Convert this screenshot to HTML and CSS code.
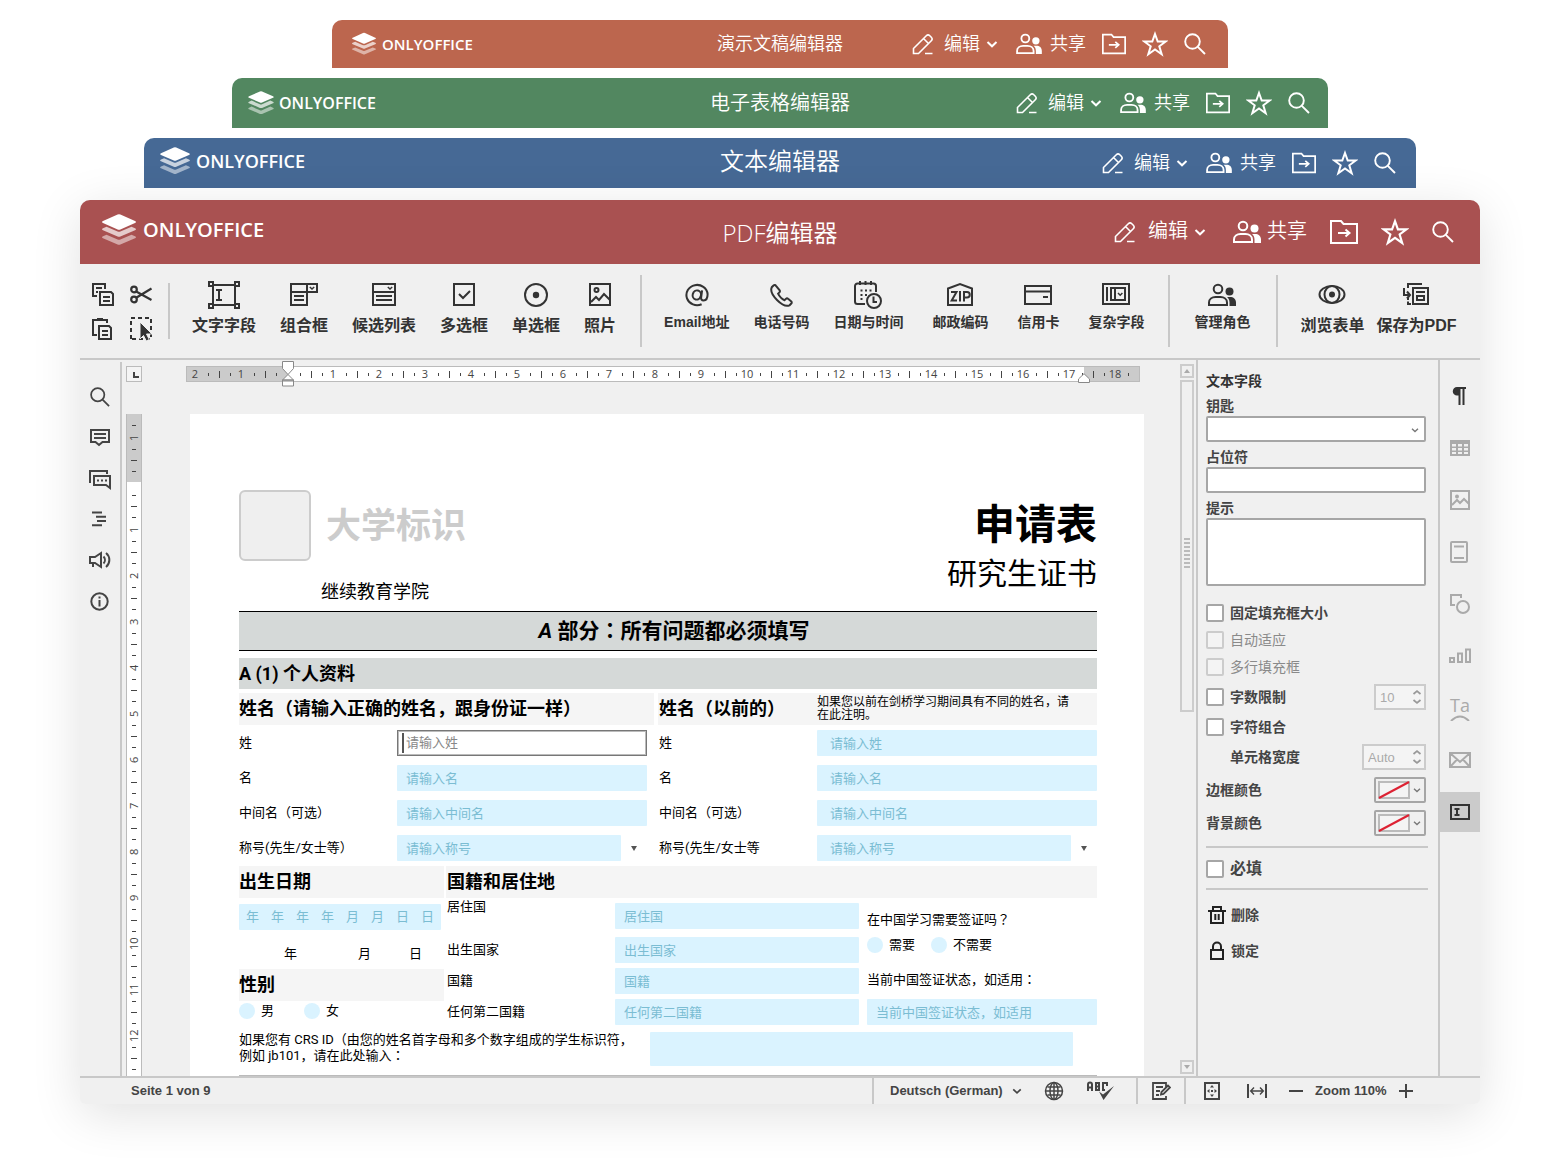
FILE: index.html
```html
<!DOCTYPE html>
<html lang="zh-CN">
<head>
<meta charset="utf-8">
<meta name="viewport" content="width=device-width, initial-scale=1">
<title>ONLYOFFICE</title>
<link rel="stylesheet" href="styles.css">
</head>
<body>
<svg class="sprite" aria-hidden="true">
  <symbol id="logo" viewBox="0 0 34 32"><path d="M15.6.5a4 4 0 0 1 2.8 0L33 7q2 1 0 2L18.4 15.400a4 4 0 0 1-2.800 0L1 9q-2-1 0-2z"/><path opacity=".7" d="M4.500 12.800 1 14.300q-2 1 0 2l14.600 6.200a4 4 0 0 0 2.800 0L33 16.300q2-1 0-2l-3.500-1.500-11.100 4.800a4 4 0 0 1-2.800 0z"/><path opacity=".5" d="M4.500 20.800 1 22.300q-2 1 0 2l14.600 6.200a4 4 0 0 0 2.800 0L33 24.300q2-1 0-2l-3.500-1.500-11.100 4.800a4 4 0 0 1-2.800 0z"/></symbol>
  <symbol id="pencil" viewBox="0 0 22 22"><g fill="none" stroke="currentColor" stroke-width="1.600"><path d="M1.500 20.500v-5L14.300 2.700a2.500 2.500 0 0 1 3.500 0l1.500 1.500a2.500 2.500 0 0 1 0 3.500L6.500 20.500zM11.500 5.500l5 5M13 20.500h7.500"/></g></symbol>
  <symbol id="chev" viewBox="0 0 12 12"><path d="M1.500 4 6 8.300 10.500 4" fill="none" stroke="currentColor" stroke-width="2"/></symbol>
  <symbol id="users" viewBox="0 0 28 24"><g fill="none" stroke="currentColor" stroke-width="2"><circle cx="10" cy="6" r="4.300"/><path d="M1 22v-2.500c0-3.500 3-5.500 6.500-5.500h5c3.500 0 6.500 2 6.500 5.500V22z"/></g><circle cx="21.500" cy="8.500" r="4"/><path d="M19 14h3c3.500 0 6 2 6 5.500V23h-6.500v-3.500c0-2.500-1-4.200-2.500-5.500z"/></symbol>
  <symbol id="folder" viewBox="0 0 28 24"><g fill="none" stroke="currentColor" stroke-width="2"><path d="M1 23V1h10l2.500 3H27v19zM8 13h11"/><path d="m15.500 9.500 4 3.500-4 3.500"/></g></symbol>
  <symbol id="star" viewBox="1 1 26 26"><path d="m14 4 2.700 7.500h8l-6.400 4.800 2.400 7.900-6.700-4.700-6.700 4.700 2.400-7.900-6.400-4.800h8z" fill="none" stroke="currentColor" stroke-width="2"/></symbol>
  <symbol id="search" viewBox="0 0 22 22"><g fill="none" stroke="currentColor" stroke-width="1.900"><circle cx="8.500" cy="8.500" r="7.300"/><path d="m13.800 13.800 7.200 7.200"/></g></symbol>

  <symbol id="copy" viewBox="0 0 22 24"><g fill="none" stroke="currentColor" stroke-width="2"><path d="M5 13H1V1h12v5M4 5h6M4 9h2M8 22V9h11l2 2v11z"/><path d="M11 14h7M11 18h7"/></g></symbol>
  <symbol id="cut" viewBox="0 0 22 24"><g fill="none" stroke="currentColor" stroke-width="2.200"><circle cx="4" cy="6.500" r="2.800"/><circle cx="4" cy="16.500" r="2.800"/><path d="M6.200 8.500 21.500 17M6.200 14.800 21.500 5.500"/></g></symbol>
  <symbol id="paste" viewBox="0 0 22 24"><g fill="none" stroke="currentColor" stroke-width="2"><path d="M5 18H1V3h14v3M7 22V9h10l2 2v11zM10 14h6M10 18h6"/></g><path d="M5 1h6v3H5z"/></symbol>
  <symbol id="select" viewBox="0 0 22 24"><path d="M1 22V1h20v21z" fill="none" stroke="currentColor" stroke-width="2" stroke-dasharray="4 3"/><path d="M10 5v17l3.500-3.500 2.800 5.500 3-1.500-2.800-5.500H22z" stroke="#f0f0f0"/></symbol>
  <symbol id="textfield" viewBox="0 0 32 28"><g fill="none" stroke="currentColor" stroke-width="2"><path d="M5 4h22M5 24h22M5 4v20M27 4v20M8 9h6M8 19h6M11 9v10"/><path fill="#f0f0f0" d="M1 1h4v4H1zM27 1h4v4h-4zM1 23h4v4H1zM27 23h4v4h-4z"/></g></symbol>
  <symbol id="combo" viewBox="0 0 28 28"><g fill="none" stroke="currentColor" stroke-width="2"><path d="M1 3h26v8H1zM1 11v13h16V3M4 15h10M4 19h10"/><path stroke-width="1.500" d="m19.800 6 2.200 2 2.200-2"/></g></symbol>
  <symbol id="list" viewBox="0 0 24 28"><g fill="none" stroke="currentColor" stroke-width="2"><path d="M1 3h22v21H1zM1 11h22M4 15h16M4 19h16"/><path stroke-width="1.500" d="m15.800 6 2.200 2 2.200-2"/></g></symbol>
  <symbol id="check" viewBox="0 0 24 28"><path d="M2 3h20v21H2zM7 13l4 4 7-7" fill="none" stroke="currentColor" stroke-width="2"/></symbol>
  <symbol id="radio" viewBox="0 0 24 28"><circle cx="12" cy="14" r="11" fill="none" stroke="currentColor" stroke-width="2"/><circle cx="12" cy="14" r="3.200"/></symbol>
  <symbol id="photo" viewBox="0 0 24 28"><g fill="none" stroke="currentColor" stroke-width="2"><path d="M2 3h20v21H2zM3 21l5-5 3 3 5-6 6 6"/><circle cx="8.500" cy="9" r="2"/></g></symbol>
  <symbol id="at" viewBox="0 0 26 28"><g fill="none" stroke="currentColor" stroke-width="2.200"><path d="M18 24a11.500 11 0 1 1 6.500-11c0 4-1.500 7-4.300 7-2.200 0-3-1.500-2.700-3.500L18.500 9"/><ellipse cx="12.800" cy="14" rx="4.500" ry="5" transform="rotate(15 12.800 14)"/></g></symbol>
  <symbol id="phone" viewBox="0 0 24 28"><path d="M4.500 4.500 2.800 6.200C1 10 4 15 8 19s9 7 12.500 5.300l1.800-1.800c.6-.6.600-1.500 0-2.100l-3.200-2.600a1.600 1.600 0 0 0-2.200.1l-1.300 1.300c-2.600-1-5.200-3.700-6.500-6.500l1.300-1.300c.6-.6.600-1.500.1-2.200L7 4.800a1.700 1.700 0 0 0-2.500-.3z" fill="none" stroke="currentColor" stroke-width="2"/></symbol>
  <symbol id="date" viewBox="0 0 28 28"><g fill="none" stroke="currentColor" stroke-width="2"><path d="M11 23H3.500A2.500 2.500 0 0 1 1 20.500V5a2.500 2.500 0 0 1 2.500-2.500h16A2.500 2.500 0 0 1 22 5v6M6 0v4M11.500 0v4M17 0v4"/><circle cx="20" cy="20" r="7"/><path d="M19.500 15.500V21H23"/><path stroke-dasharray="2 2.500" d="M6.500 9.500h11M6.500 14h7M6.500 18h3"/></g></symbol>
  <symbol id="zip" viewBox="0 0 28 28"><g fill="none" stroke="currentColor" stroke-width="2"><path d="M2 24V7.500L14 3l12 4.500V24z"/><path d="M5 11h5.500L5.700 19.500H11M14 10v10.500M18 20.500V11h3a2.500 2.500 0 0 1 0 5.500h-3"/></g></symbol>
  <symbol id="card" viewBox="0 0 28 28"><path d="M1 5h26v18H1zM1 10.500h26M19 16h5" fill="none" stroke="currentColor" stroke-width="2"/></symbol>
  <symbol id="complex" viewBox="0 0 28 28"><g fill="none" stroke="currentColor" stroke-width="2"><path d="M1 3h26v20H1zM5 6v14M9 7h14v12H9zM13 7v12"/><path stroke-width="1.500" d="m16 12 2.200 2.200 2.200-2.200"/></g></symbol>
  <symbol id="eye" viewBox="0 0 28 28"><g fill="none" stroke="currentColor" stroke-width="2"><ellipse cx="14" cy="13.500" rx="12.500" ry="8.500"/><ellipse cx="14" cy="13.500" rx="7.500" ry="8.500"/></g><circle cx="14" cy="13.500" r="3"/></symbol>
  <symbol id="savepdf" viewBox="0 0 28 28"><g fill="none" stroke="currentColor" stroke-width="2"><path d="M20 3H6v4M2 7v7h6M11 7h15v16H11zM14 11h9M15 15h7v4h-7zM6 17v2M6 20.500V23h3"/><path d="m5 10.500 3 3.500-3 3.500"/></g></symbol>

  <symbol id="comment" viewBox="0 0 22 22"><path d="M2 3h18v12h-6.500L10 18l-3.500-3H2zM5 7h12M5 11h12" fill="none" stroke="currentColor" stroke-width="2"/></symbol>
  <symbol id="chat" viewBox="0 0 24 22"><g fill="none" stroke="currentColor" stroke-width="2"><path d="M2 15V3h17v3M6 8h16v12l-4-3H6z"/><path stroke-dasharray="2 2" d="M9 12.500h10"/></g></symbol>
  <symbol id="heads" viewBox="0 0 22 22"><path d="M3 3.500h10M7 7.700h10M8 12h9M3 16.300h10" fill="none" stroke="currentColor" stroke-width="2"/></symbol>
  <symbol id="speaker" viewBox="0 0 24 22"><path d="M2 7v6h5l6 4v-14L7 7zM5 13v4M15.500 6.500a5 5 0 0 1 0 7M18 3a9 9 0 0 1 0 14" fill="none" stroke="currentColor" stroke-width="2"/></symbol>
  <symbol id="info" viewBox="0 0 22 22"><circle cx="10.500" cy="10.500" r="8.200" fill="none" stroke="currentColor" stroke-width="2"/><path d="M9.500 9h2v6.500h-2zM9.500 5.500h2v2h-2z"/></symbol>

  <symbol id="para" viewBox="0 0 22 22"><path d="M17 2v2h-1.500v16h-2V4h-2v16h-2v-9.500H8A4.200 4.200 0 0 1 8 2z"/></symbol>
  <symbol id="table" viewBox="0 0 22 22"><path d="M1 3h20v16H1zm2 4v2.500h4V7zm6 0v2.500h4V7zm6 0v2.500h4V7zM3 11v2.500h4V11zm6 0v2.500h4V11zm6 0v2.500h4V11zM3 15v2h4v-2zm6 0v2h4v-2zm6 0v2h4v-2z" fill-rule="evenodd"/></symbol>
  <symbol id="image" viewBox="0 0 22 22"><path d="M2 2h18v18H2zM3 16l5-5 3 3 4-4 5 5" fill="none" stroke="currentColor" stroke-width="2"/><circle cx="8" cy="7.500" r="2"/></symbol>
  <symbol id="headfoot" viewBox="0 0 22 22"><path d="M3 1h14q1 0 1 1v18q0 1-1 1H3q-1 0-1-1V2q0-1 1-1zM5 5.500h10M5 17h10" fill="none" stroke="currentColor" stroke-width="2"/></symbol>
  <symbol id="shape" viewBox="0 0 22 22"><path d="M6 12H2V2h10v3" fill="none" stroke="currentColor" stroke-width="2"/><circle cx="14" cy="14" r="6" fill="none" stroke="currentColor" stroke-width="2"/></symbol>
  <symbol id="chart" viewBox="0 0 24 22"><path d="M2 13h4v4H2zM10 8.500h4V17h-4zM18 4.500h4V17h-4z" fill="none" stroke="currentColor" stroke-width="2"/></symbol>
  <symbol id="mail" viewBox="0 0 24 22"><path d="M2 4h20v14H2zM2 4l10 9L22 4M2 18l7-7.500M22 18l-7-7.500" fill="none" stroke="currentColor" stroke-width="2"/></symbol>
  <symbol id="field" viewBox="0 0 22 22"><path d="M2 4h18v14H2zM5.500 8h5M5.500 14h5M8 8v6" fill="none" stroke="currentColor" stroke-width="2"/></symbol>
  <symbol id="spin" viewBox="0 0 10 16"><path d="m1.500 5 3.500-3 3.500 3M1.500 11l3.500 3 3.500-3" fill="none" stroke="currentColor" stroke-width="1.700"/></symbol>
  <symbol id="trash" viewBox="0 0 18 20"><path d="M0 6h18M5 6V2h8v4M3 6v12h12V6M7.300 9v6M10.700 9v6" fill="none" stroke="currentColor" stroke-width="2"/></symbol>
  <symbol id="lock" viewBox="0 0 18 20"><path d="M3 9h12v9H3zM5 9V5.500a4 4 0 0 1 8 0V9" fill="none" stroke="currentColor" stroke-width="2"/></symbol>

  <symbol id="globe" viewBox="0 0 20 20"><g fill="none" stroke="currentColor" stroke-width="1.500"><circle cx="10" cy="10" r="8.500"/><ellipse cx="10" cy="10" rx="4" ry="8.500"/><path d="M10 2v16M2 10h16M3.500 6h13M3.500 14h13"/></g></symbol>
  <symbol id="spell" viewBox="0 0 28 20"><g fill="none" stroke="currentColor" stroke-width="2"><path d="M2 10V3.500a2 2 0 0 1 4 0V10M2 6.500h4M10 1v8M9 2h4v3l-1 .5 1 .5v3H9M21 5V2h-4v7h2"/></g><path d="m13 10.500 4 3L28 5 17.500 19z"/></symbol>
  <symbol id="review" viewBox="0 0 20 20"><path d="M15 6V2H2v16h13v-3M5 6h7M5 10h4M5 14h3M10 13.500l.5-2.500L17 4.500l2 2-6.500 6.500z" fill="none" stroke="currentColor" stroke-width="1.800"/></symbol>
  <symbol id="fitpage" viewBox="0 0 20 20"><path d="M3 2h14v16H3z" fill="none" stroke="currentColor" stroke-width="2"/><path d="m10 4 2 2.500H8zM10 16l2-2.500H8zM5 10l2.500-2v4zM15 10l-2.500-2v4zM9 9h2v2H9z"/></symbol>
  <symbol id="fitwidth" viewBox="0 0 22 20"><path d="M2 3v14M20 3v14" stroke="currentColor" stroke-width="2"/><path d="M5 10h12M8 6.500 4.700 10 8 13.500M14 6.500l3.300 3.500-3.300 3.500" fill="none" stroke="currentColor" stroke-width="1.400"/></symbol>
  <symbol id="minus" viewBox="0 0 16 16"><path d="M1 8h14" stroke="currentColor" stroke-width="2"/></symbol>
  <symbol id="plus" viewBox="0 0 16 16"><path d="M1 8h14M8 1v14" stroke="currentColor" stroke-width="2"/></symbol>
</svg>

<main class="stack">
  <header class="bar bar-slides">
    <div class="brand"><svg><use href="#logo"/></svg><span>ONLYOFFICE</span></div>
    <h2>演示文稿编辑器</h2>
    <div class="actions">
      <button class="edit"><svg class="i22"><use href="#pencil"/></svg><span>编辑</span><svg class="i12"><use href="#chev"/></svg></button>
      <button class="share"><svg class="iusers"><use href="#users"/></svg><span>共享</span></button>
      <button aria-label="打开文件位置"><svg class="ifolder"><use href="#folder"/></svg></button>
      <button aria-label="收藏"><svg class="istar"><use href="#star"/></svg></button>
      <button aria-label="搜索"><svg class="i22"><use href="#search"/></svg></button>
    </div>
  </header>
  <header class="bar bar-sheets">
    <div class="brand"><svg><use href="#logo"/></svg><span>ONLYOFFICE</span></div>
    <h2>电子表格编辑器</h2>
    <div class="actions">
      <button class="edit"><svg class="i22"><use href="#pencil"/></svg><span>编辑</span><svg class="i12"><use href="#chev"/></svg></button>
      <button class="share"><svg class="iusers"><use href="#users"/></svg><span>共享</span></button>
      <button aria-label="打开文件位置"><svg class="ifolder"><use href="#folder"/></svg></button>
      <button aria-label="收藏"><svg class="istar"><use href="#star"/></svg></button>
      <button aria-label="搜索"><svg class="i22"><use href="#search"/></svg></button>
    </div>
  </header>
  <header class="bar bar-docs">
    <div class="brand"><svg><use href="#logo"/></svg><span>ONLYOFFICE</span></div>
    <h2>文本编辑器</h2>
    <div class="actions">
      <button class="edit"><svg class="i22"><use href="#pencil"/></svg><span>编辑</span><svg class="i12"><use href="#chev"/></svg></button>
      <button class="share"><svg class="iusers"><use href="#users"/></svg><span>共享</span></button>
      <button aria-label="打开文件位置"><svg class="ifolder"><use href="#folder"/></svg></button>
      <button aria-label="收藏"><svg class="istar"><use href="#star"/></svg></button>
      <button aria-label="搜索"><svg class="i22"><use href="#search"/></svg></button>
    </div>
  </header>

  <section class="app">
    <header class="bar bar-pdf">
      <div class="brand"><svg><use href="#logo"/></svg><span>ONLYOFFICE</span></div>
      <h1>PDF编辑器</h1>
      <div class="actions">
        <button class="edit"><svg class="i22"><use href="#pencil"/></svg><span>编辑</span><svg class="i12"><use href="#chev"/></svg></button>
        <button class="share"><svg class="iusers"><use href="#users"/></svg><span>共享</span></button>
        <button aria-label="打开文件位置"><svg class="ifolder"><use href="#folder"/></svg></button>
        <button aria-label="收藏"><svg class="istar"><use href="#star"/></svg></button>
        <button aria-label="搜索"><svg class="i22"><use href="#search"/></svg></button>
      </div>
    </header>

    <nav class="toolbar">
      <div class="clip">
        <button aria-label="复制"><svg><use href="#copy"/></svg></button>
        <button aria-label="剪切"><svg><use href="#cut"/></svg></button>
        <button aria-label="粘贴"><svg><use href="#paste"/></svg></button>
        <button aria-label="选择"><svg><use href="#select"/></svg></button>
      </div>
      <div class="group">
        <button><svg class="w32"><use href="#textfield"/></svg>文字字段</button>
        <button><svg class="w28"><use href="#combo"/></svg>组合框</button>
        <button><svg class="w24"><use href="#list"/></svg>候选列表</button>
        <button><svg class="w24"><use href="#check"/></svg>多选框</button>
        <button><svg class="w24"><use href="#radio"/></svg>单选框</button>
        <button><svg class="w24"><use href="#photo"/></svg>照片</button>
      </div>
      <div class="group small">
        <button><svg class="w24"><use href="#at"/></svg>Email地址</button>
        <button><svg class="w24"><use href="#phone"/></svg>电话号码</button>
        <button><svg class="w28"><use href="#date"/></svg>日期与时间</button>
        <div class="wider">
          <button><svg class="w28"><use href="#zip"/></svg>邮政编码</button>
          <button><svg class="w28"><use href="#card"/></svg>信用卡</button>
          <button><svg class="w28"><use href="#complex"/></svg>复杂字段</button>
        </div>
      </div>
      <div class="group small roles">
        <button><svg class="w28 people"><use href="#users"/></svg>管理角色</button>
      </div>
      <div class="group last">
        <button><svg class="w28"><use href="#eye"/></svg>浏览表单</button>
        <button><svg class="w28"><use href="#savepdf"/></svg>保存为PDF</button>
      </div>
    </nav>

    <div class="workspace">
      <aside class="left">
        <button aria-label="查找"><svg class="i20"><use href="#search"/></svg></button>
        <button aria-label="批注"><svg class="i22"><use href="#comment"/></svg></button>
        <button aria-label="聊天"><svg class="w24"><use href="#chat"/></svg></button>
        <button aria-label="标题"><svg class="i22"><use href="#heads"/></svg></button>
        <button aria-label="反馈"><svg class="w24"><use href="#speaker"/></svg></button>
        <button aria-label="关于"><svg class="i22"><use href="#info"/></svg></button>
      </aside>

      <div class="canvas">
        <div class="ruler-row">
          <div class="corner"></div>
          <div class="hruler-wrap">
            <div class="hruler">
              <i>2</i><i>1</i><i></i><i>1</i><i>2</i><i>3</i><i>4</i><i>5</i><i>6</i><i>7</i><i>8</i><i>9</i><i>10</i><i>11</i><i>12</i><i>13</i><i>14</i><i>15</i><i>16</i><i>17</i><i>18</i>
            </div>
            <svg class="indent-left" viewBox="0 0 12 28"><g fill="#fff" stroke="#888"><path d="M.5.500h11v7L6 13.500.500 7.500zM6 13.500l5.500 5.500H.500zM.5 19h11v6H.500z"/><path d="M.5 20h11"/></g></svg>
            <svg class="indent-right" viewBox="0 0 12 10"><path d="M6 .7 11.500 6v3.500H.500V6z" fill="#fff" stroke="#888"/></svg>
          </div>
        </div>
        <div class="page-row">
          <div class="vruler">
            <i class="lead"></i><i><b>1</b></i><i></i><i><b>1</b></i><i><b>2</b></i><i><b>3</b></i><i><b>4</b></i><i><b>5</b></i><i><b>6</b></i><i><b>7</b></i><i><b>8</b></i><i><b>9</b></i><i><b>10</b></i><i><b>11</b></i><i><b>12</b></i>
          </div>
          <form class="page">
            <div class="doc-head">
              <div>
                <div class="uni"><span class="uni-box"></span><strong>大学标识</strong></div>
                <p class="college">继续教育学院</p>
              </div>
              <div class="doc-title">
                <h2>申请表</h2>
                <p>研究生证书</p>
              </div>
            </div>
            <h3 class="part"><em>A</em> 部分<span class="wide" lang="ja">：</span>所有问题都必须填写</h3>
            <h4 class="section">A (1) 个人资料</h4>

            <div class="names">
              <div class="name-col">
                <h5>姓名（请输入正确的姓名，跟身份证一样）</h5>
                <div class="rows">
                  <label for="n1">姓</label><span class="focus"><input id="n1" type="text" placeholder="请输入姓"></span>
                  <label for="n2">名</label><input id="n2" type="text" placeholder="请输入名">
                  <label for="n3">中间名（可选）</label><input id="n3" type="text" placeholder="请输入中间名">
                  <label for="n4">称号(先生/女士等）</label><span class="pick"><input id="n4" type="text" placeholder="请输入称号"><button type="button" aria-label="展开"></button></span>
                </div>
              </div>
              <div class="name-col former">
                <div class="head-note"><h5>姓名（以前的）</h5><p>如果您以前在剑桥学习期间具有不同的姓名，请在此注明。</p></div>
                <div class="rows">
                  <label for="f1">姓</label><input id="f1" type="text" placeholder="请输入姓">
                  <label for="f2">名</label><input id="f2" type="text" placeholder="请输入名">
                  <label for="f3">中间名（可选）</label><input id="f3" type="text" placeholder="请输入中间名">
                  <label for="f4">称号(先生/女士等</label><span class="pick"><input id="f4" type="text" placeholder="请输入称号"><button type="button" aria-label="展开"></button></span>
                </div>
              </div>
            </div>

            <div class="details">
              <div class="birth">
                <h5>出生日期</h5>
                <div class="comb">
                  <input aria-label="年 1" maxlength="1" placeholder="年"><input aria-label="年 2" maxlength="1" placeholder="年"><input aria-label="年 3" maxlength="1" placeholder="年"><input aria-label="年 4" maxlength="1" placeholder="年"><input aria-label="月 1" maxlength="1" placeholder="月"><input aria-label="月 2" maxlength="1" placeholder="月"><input aria-label="日 1" maxlength="1" placeholder="日"><input aria-label="日 2" maxlength="1" placeholder="日">
                </div>
                <div class="units"><span>年</span><span>月</span><span>日</span></div>
                <h5>性别</h5>
                <div class="radios sex">
                  <label><input type="radio" name="sex">男</label>
                  <label><input type="radio" name="sex">女</label>
                </div>
              </div>
              <div class="nation">
                <h5>国籍和居住地</h5>
                <div class="nation-grid">
                  <div class="places">
                    <div class="place first"><label for="p1">居住国</label><input id="p1" type="text" placeholder="居住国"></div>
                    <div class="place"><label for="p2">出生国家</label><input id="p2" type="text" placeholder="出生国家"></div>
                    <div class="place"><label for="p3">国籍</label><input id="p3" type="text" placeholder="国籍"></div>
                    <div class="place"><label for="p4">任何第二国籍</label><input id="p4" type="text" placeholder="任何第二国籍"></div>
                  </div>
                  <div class="visa">
                    <p>在中国学习需要签证吗<span class="wide" lang="ja">？</span></p>
                    <div class="radios">
                      <label><input type="radio" name="visa">需要</label>
                      <label><input type="radio" name="visa">不需要</label>
                    </div>
                    <label class="status" for="v1">当前中国签证状态，如适用<span class="wide" lang="ja">：</span></label>
                    <input id="v1" type="text" placeholder="当前中国签证状态，如适用">
                  </div>
                </div>
              </div>
            </div>

            <div class="crs">
              <label for="crs">如果您有 CRS ID（由您的姓名首字母和多个数字组成的学生标识符，<br>例如 jb101，请在此处输入<span class="wide" lang="ja">：</span></label>
              <input id="crs" type="text">
            </div>
          </form>
        </div>
      </div>

      <div class="scroll">
        <button class="arrow up" aria-label="向上滚动"></button>
        <div class="thumb"><span></span></div>
        <button class="arrow down" aria-label="向下滚动"></button>
      </div>

      <aside class="panel">
        <h3>文本字段</h3>
        <label for="key">钥匙</label>
        <div class="select"><select id="key"><option></option></select><svg><use href="#chev"/></svg></div>
        <label for="ph">占位符</label>
        <input class="box" id="ph" type="text">
        <label for="tip">提示</label>
        <textarea class="box" id="tip"></textarea>
        <div class="opts">
          <div class="opt"><input type="checkbox" id="o1"><label for="o1">固定填充框大小</label></div>
          <div class="opt off"><input type="checkbox" id="o2" disabled><label for="o2">自动适应</label></div>
          <div class="opt off"><input type="checkbox" id="o3" disabled><label for="o3">多行填充框</label></div>
          <div class="opt"><input type="checkbox" id="o4"><label for="o4">字数限制</label><span class="spin narrow"><input type="text" value="10" aria-label="字数" disabled><svg><use href="#spin"/></svg></span></div>
          <div class="opt"><input type="checkbox" id="o5"><label for="o5">字符组合</label></div>
          <div class="opt inset"><label for="cw">单元格宽度</label><span class="spin"><input type="text" id="cw" value="Auto" disabled><svg><use href="#spin"/></svg></span></div>
          <div class="opt"><label for="bc">边框颜色</label><button class="color" id="bc"><svg class="swatch" viewBox="0 0 32 18"><path d="M1 1h30v16H1z" fill="#f4f4f4" stroke="#bbb" stroke-width="2"/><path d="M1 17 31 1" stroke="#d23" stroke-width="2"/></svg><svg class="mini"><use href="#chev"/></svg></button></div>
          <div class="opt"><label for="bg">背景颜色</label><button class="color" id="bg"><svg class="swatch" viewBox="0 0 32 18"><path d="M1 1h30v16H1z" fill="#f4f4f4" stroke="#bbb" stroke-width="2"/><path d="M1 17 31 1" stroke="#d23" stroke-width="2"/></svg><svg class="mini"><use href="#chev"/></svg></button></div>
        </div>
        <div class="required opt"><input type="checkbox" id="o6"><label for="o6">必填</label></div>
        <button class="cmd"><svg><use href="#trash"/></svg>删除</button>
        <button class="cmd"><svg><use href="#lock"/></svg>锁定</button>
      </aside>

      <aside class="strip">
        <button class="dark" aria-label="段落"><svg class="i22"><use href="#para"/></svg></button>
        <button aria-label="表格"><svg class="i22"><use href="#table"/></svg></button>
        <button aria-label="图片"><svg class="i22"><use href="#image"/></svg></button>
        <button aria-label="页眉页脚"><svg class="i22"><use href="#headfoot"/></svg></button>
        <button aria-label="形状"><svg class="i22"><use href="#shape"/></svg></button>
        <button aria-label="图表"><svg class="w24"><use href="#chart"/></svg></button>
        <button class="art" aria-label="艺术字"><span>Ta</span><svg viewBox="0 0 20 6"><path d="M1 6Q10-3 19 6" fill="none" stroke="currentColor" stroke-width="2"/></svg></button>
        <button aria-label="邮件"><svg class="w24"><use href="#mail"/></svg></button>
        <button class="dark on" aria-label="表单"><svg class="i22"><use href="#field"/></svg></button>
      </aside>
    </div>

    <footer class="status-bar">
      <span class="pages">Seite 1 von 9</span>
      <div class="cell lang">
        <button>Deutsch (German)<svg class="chev"><use href="#chev"/></svg></button>
        <button aria-label="语言"><svg class="i20"><use href="#globe"/></svg></button>
        <button aria-label="拼写检查"><svg class="ispell"><use href="#spell"/></svg></button>
      </div>
      <div class="cell rev"><button aria-label="修订"><svg class="i20"><use href="#review"/></svg></button></div>
      <div class="cell zoom">
        <button aria-label="适合页面"><svg class="i20"><use href="#fitpage"/></svg></button>
        <button aria-label="适合宽度"><svg class="i22"><use href="#fitwidth"/></svg></button>
        <div class="level">
          <button aria-label="缩小"><svg class="i16"><use href="#minus"/></svg></button>
          <span>Zoom 110%</span>
          <button aria-label="放大"><svg class="i16"><use href="#plus"/></svg></button>
        </div>
      </div>
    </footer>
  </section>
</main>
</body>
</html>
```
FILE: styles.css
```css
*, ::before, ::after { box-sizing: border-box; }

body {
  margin: 0;
  background: #fff;
  color: #444;
  font-family: "Liberation Sans", "Noto Sans CJK SC", sans-serif;
}

h1, h2, h3, h4, h5, p { margin: 0; }

button {
  display: flex;
  align-items: center;
  padding: 0;
  border: 0;
  background: none;
  color: inherit;
  font: inherit;
  white-space: nowrap;
}

svg { display: block; flex: none; fill: currentColor; }
.sprite { position: absolute; width: 0; height: 0; }

.i12 { width: 12px; height: 12px; }
.i16 { width: 16px; height: 16px; }
.i20 { width: 20px; height: 20px; }
.i22 { width: 22px; height: 22px; }
.w24 { width: 24px; height: 28px; }
.w28 { width: 28px; height: 28px; }
.w32 { width: 32px; height: 28px; }

.stack { padding: 20px 80px 56px; }

/* Title bars */
.bar {
  display: grid;
  grid-template-columns: 1fr auto 1fr;
  align-items: center;
  height: 50px;
  padding: 0 16px;
  border-radius: 10px 10px 0 0;
  color: #fff;
  font-family: "Open Sans", "Noto Sans CJK SC", sans-serif;
}
.bar h1, .bar h2 { font-size: 24px; line-height: 32px; font-weight: 350; }
.bar-slides { height: 48px; margin: 0 252px 10px; padding: 0 20px; background: #bc664e; }
.bar-slides h2 { padding-bottom: 2px; font-size: 18px; }
.bar-sheets { margin: 0 152px 10px; background: #528760; }
.bar-sheets h2 { font-size: 20px; }
.bar-docs { margin: 0 64px 12px; background: #466995; }
.bar-docs h2 { padding-bottom: 4px; }
.bar-pdf { height: 64px; padding: 0 22px; background: #a95151; }
.bar-pdf h1 { padding-top: 2px; }

.brand { display: flex; align-items: center; gap: 6px; font-weight: 650; font-size: 15px; line-height: 24px; }
.brand svg { width: 24px; height: 24px; }
.bar-sheets .brand { font-size: 16px; gap: 5px; }
.bar-sheets .brand svg { width: 26px; }
.bar-docs .brand { font-size: 18px; padding-bottom: 4px; }
.bar-docs .brand svg { width: 30px; height: 28px; }
.bar-pdf .brand { gap: 7px; font-size: 20px; padding-bottom: 4px; }
.bar-pdf .brand svg { width: 34px; height: 32px; }

.actions { display: flex; align-items: center; justify-content: flex-end; gap: 16px; padding-right: 2px; font-size: 18px; line-height: 24px; font-weight: 350; }
.edit { gap: 6px; margin-right: 2px; }
.edit span { padding: 0 0 2px 4px; }
.share { gap: 8px; }
.share span { padding-bottom: 2px; }
.iusers { width: 26px; height: 22px; }
.ifolder { width: 24px; height: 22px; }
.istar { width: 26px; height: 26px; }
.bar-docs .actions { padding-right: 4px; }
.bar-pdf .actions { gap: 23px; padding-right: 4px; font-size: 20px; }
.bar-pdf .edit { margin-right: 4px; }
.bar-pdf .edit span { padding-left: 6px; }
.bar-pdf .share { gap: 6px; }
.bar-pdf .iusers, .bar-pdf .ifolder { width: 28px; height: 24px; }
.bar-pdf .istar { width: 28px; height: 28px; }

/* Editor window */
.app {
  border-radius: 10px 10px 6px 6px;
  background: #f0f0f0;
  box-shadow: 0 10px 50px rgba(0, 0, 0, .12);
}

.toolbar {
  display: flex;
  align-items: flex-start;
  height: 96px;
  padding: 11px 0 0 12px;
  border-bottom: 2px solid #c8c8c8;
  color: #333;
  font-weight: 700;
}
.clip {
  display: grid;
  grid-template-columns: 22px 22px;
  gap: 10px 16px;
  margin-top: 8px;
  padding-right: 16px;
  border-right: 2px solid #c8c8c8;
  height: 56px;
}
.clip svg { width: 22px; height: 24px; }
.group {
  display: flex;
  align-items: flex-start;
  gap: 24px;
  height: 72px;
  padding: 6px 24px 0 22px;
  border-right: 2px solid #c8c8c8;
  font-size: 16px;
  line-height: 20px;
}
.group button { flex-direction: column; gap: 7px; }
.group.small { font-size: 14px; }
.group.small button { gap: 3px; }
.wider { display: flex; gap: 29px; padding-left: 5px; }
.group.roles { padding: 6px 26px 0 24px; }
.people { padding: 2px 0; }
.group.last { gap: 12px; border-right: 0; }

.workspace { display: grid; grid-template-columns: 42px minmax(0, 1fr) 18px 242px 42px; }

.left {
  display: flex;
  flex-direction: column;
  align-items: center;
  gap: 12px;
  margin-top: 2px;
  padding-top: 20px;
  border-right: 2px solid #c8c8c8;
}
.left button { height: 29px; }
.left .w24 { height: 22px; }

/* Rulers */
.canvas { min-width: 0; padding: 6px 34px 0 4px; }
.ruler-row { display: flex; gap: 44px; padding-right: 4px; }
.corner { flex: none; width: 16px; height: 16px; padding: 5px 0 0 6px; border: 1px solid #bbb; background: #f4f4f4; }
.corner::before { content: ""; display: block; width: 6px; height: 6px; border: solid #444; border-width: 0 0 2px 2px; }
.hruler-wrap { position: relative; flex: 1; min-width: 0; }
.hruler {
  display: flex;
  height: 16px;
  overflow: hidden;
  border: 1px solid #bbb;
  background: linear-gradient(#cbcbcb, #cbcbcb) left / 101px 100% no-repeat, linear-gradient(#cbcbcb, #cbcbcb) right / 55px 100% no-repeat, #fff;
  color: #444;
  font: 11px/14px "Open Sans", sans-serif;
}
.hruler i {
  flex: none;
  width: 46px;
  height: 14px;
  padding-right: 30px;
  font-style: normal;
  display: flex;
  justify-content: center;
  background:
    linear-gradient(#444, #444) 21px 6px / 1px 3px no-repeat,
    linear-gradient(#444, #444) 32px 4px / 1px 7px no-repeat,
    linear-gradient(#444, #444) 43px 6px / 1px 3px no-repeat;
}
.hruler i:last-child { background-size: 1px 3px, 0 0, 0 0; }
.indent-left { position: absolute; left: 96px; top: -5px; width: 12px; height: 28px; }
.indent-right { position: absolute; right: 50px; top: 7px; width: 12px; height: 10px; }

.page-row { display: flex; gap: 48px; margin-top: 32px; }
.vruler {
  flex: none;
  width: 16px;
  height: 662px;
  overflow: hidden;
  border: solid #bbb;
  border-width: 0 1px;
  background: linear-gradient(#cbcbcb, #cbcbcb) top / 100% 68px no-repeat, #fff;
  color: #444;
  font: 11px/14px "Open Sans", sans-serif;
}
.vruler i {
  display: flex;
  justify-content: center;
  width: 14px;
  height: 46px;
  padding-bottom: 30px;
  font-style: normal;
  background:
    linear-gradient(#444, #444) 5px 19px / 4px 1px no-repeat,
    linear-gradient(#444, #444) 4px 30px / 6px 1px no-repeat,
    linear-gradient(#444, #444) 5px 41px / 4px 1px no-repeat;
}
.vruler .lead { height: 16px; padding: 0; background: linear-gradient(#444, #444) 5px 11px / 4px 1px no-repeat; }
.vruler b { font-weight: 400; writing-mode: vertical-rl; transform: rotate(180deg); text-align: center; }

/* Document */
.page {
  flex: 1;
  min-width: 0;
  padding: 76px 47px 0 49px;
  background: #fff;
  color: #000;
  font: 13px/20px Roboto, "Noto Sans CJK SC", sans-serif;
}
.wide { font-family: "Noto Sans CJK JP", sans-serif; line-height: 0; }
.doc-head { display: flex; justify-content: space-between; }
.uni { display: flex; align-items: center; gap: 15px; }
.uni-box { width: 72px; height: 71px; border: 2px solid #ccc; border-radius: 6px; background: #efefef; }
.uni strong { padding-top: 3px; color: #ccc; font-size: 35px; line-height: 48px; }
.college { margin-top: 19px; padding-left: 82px; font-size: 18px; line-height: 24px; }
.doc-title { padding-top: 11px; text-align: right; }
.doc-title h2 { font-size: 41px; line-height: 48px; }
.doc-title p { margin-top: 7px; font-size: 30px; line-height: 36px; }
.part {
  height: 40px;
  margin-top: 7px;
  padding-left: 12px;
  border: solid #000;
  border-width: 1px 0;
  background: #d5d9d8;
  font-size: 21px;
  line-height: 38px;
  text-align: center;
}
.section { height: 31px; margin-top: 7px; background: #d5d9d8; font-size: 18px; line-height: 31px; }
.page h5 { background: #f5f5f5; font-size: 18px; line-height: 32px; white-space: nowrap; }

.page input[type="text"], .comb {
  width: 100%;
  min-width: 0;
  height: 26px;
  padding: 0 9px;
  border: 0;
  border-radius: 1px;
  background: #daf3ff;
  font: inherit;
}
.page input::placeholder { color: #7bbdd3; opacity: 1; }

.names { display: grid; grid-template-columns: 415fr 439fr; gap: 4px; margin-top: 4px; }
.rows { display: grid; grid-template-columns: 158px minmax(0, 1fr); row-gap: 9px; align-items: center; padding: 5px 7px 0 0; }
.former .rows, .head-note { padding-left: 1px; padding-right: 0; }
.page .former input[type="text"] { padding-left: 13px; }
.head-note { display: grid; grid-template-columns: 158px minmax(0, 1fr); background: #f5f5f5; }
.head-note p { padding: 3px 26px 0 0; font-size: 12px; line-height: 13px; }
.page .focus { display: flex; align-items: center; height: 26px; padding-left: 4px; border: 1px solid #777; outline: 1px solid #bbb; outline-offset: -2px; }
.page .focus input[type="text"] { height: 20px; padding: 0 2px; border-left: 2px solid #555; border-radius: 0; background: none; }
.page .focus input::placeholder { color: #888; }
.pick { display: flex; }
.pick button { flex: none; justify-content: center; width: 26px; }
.pick button::before { content: ""; border: solid transparent; border-width: 5px 3px 0; border-top-color: #555; }

.details { display: grid; grid-template-columns: 205px minmax(0, 1fr); gap: 2px; margin-top: 5px; }
.comb { display: grid; grid-template-columns: repeat(8, 1fr); width: auto; margin: 6px 3px 14px 0; padding: 0 1px; }
.comb input { width: 100%; min-width: 0; padding: 0; border: 0; background: none; font: inherit; text-align: center; }
.units { display: grid; grid-template-columns: 104px 44px 57px; height: 25px; }
.units span { text-align: right; padding-right: 46px; }
.units span:nth-child(2) { padding-right: 16px; }
.units span:nth-child(3) { padding-right: 22px; }
.radios { display: flex; gap: 16px; }
.radios label { display: flex; align-items: center; gap: 6px; }
.radios input { appearance: none; width: 16px; height: 16px; margin: 0; border-radius: 8px; background: #daf3ff; }
.sex { gap: 30px; }

.nation h5 { padding-left: 1px; }
.nation-grid { display: grid; grid-template-columns: minmax(0, 413fr) minmax(0, 230fr); gap: 8px; }
.places { display: flex; flex-direction: column; gap: 5px; padding-top: 5px; }
.place { display: grid; grid-template-columns: 168px minmax(0, 1fr); align-items: center; padding-left: 1px; }
.first { align-items: start; padding-bottom: 3px; }
.first label { line-height: 8px; }
.visa { padding-top: 12px; }
.visa .radios { margin: 5px 0 15px; }
.status { display: block; margin-bottom: 9px; }

.crs { display: flex; align-items: flex-start; gap: 12px; margin-top: 7px; padding: 0 24px 9px 0; border-bottom: 1px solid #bbb; }
.crs label { flex: none; width: 399px; line-height: 16px; white-space: nowrap; }
.page .crs input[type="text"] { height: 34px; }

/* Scroll bar */
.scroll { display: flex; flex-direction: column; gap: 2px; padding: 4px 2px 2px; }
.arrow { justify-content: center; width: 14px; height: 14px; border: 2px solid #ccc; }
.arrow::before { content: ""; border: solid transparent; }
.up::before { border-width: 0 3px 4px; border-bottom-color: #aaa; }
.down::before { border-width: 4px 3px 0; border-top-color: #aaa; }
.thumb { display: flex; align-items: center; justify-content: center; height: 332px; margin-bottom: auto; border: 2px solid #ccc; }
.thumb span { width: 6px; height: 30px; margin-top: 14px; background: repeating-linear-gradient(#bbb 0 2px, transparent 2px 4px); }

/* Field settings */
.panel { padding: 11px 12px 0 8px; border-left: 2px solid #c8c8c8; font-size: 14px; line-height: 20px; font-weight: 700; }
.panel h3 { margin-bottom: 5px; font-size: 14px; line-height: 20px; color: #333; }
.panel > label { display: block; }
.box, .select select {
  display: block;
  width: 100%;
  height: 26px;
  margin: 0 0 5px;
  border: 2px solid #a6a6a6;
  border-radius: 2px;
  background: #fff;
  font: inherit;
  resize: none;
}
.select { position: relative; }
.select select { appearance: none; }
.select svg { position: absolute; right: 7px; top: 10px; width: 8px; height: 8px; color: #777; }
textarea.box { height: 68px; margin: 0; }
.opts { display: flex; flex-direction: column; gap: 7px; margin-top: 17px; padding-bottom: 10px; }
.opt { display: flex; align-items: center; gap: 6px; }
.opt input[type="checkbox"] { appearance: none; flex: none; width: 18px; height: 18px; margin: 0; border: 2px solid #a6a6a6; border-radius: 2px; background: #fff; }
.off { color: #8a8a8a; font-weight: 400; }
.opt.off input[type="checkbox"] { border-color: #ccc; background: #f4f4f4; }
.inset { padding-left: 24px; }
.spin { position: relative; width: 64px; margin-left: auto; color: #aaa; }
.narrow { width: 52px; }
.spin input { display: block; width: 100%; height: 26px; padding: 0 4px; border: 2px solid #ccc; background: #f4f4f4; color: #aaa; font: 13px/20px "Liberation Sans", sans-serif; }
.spin svg { position: absolute; right: 4px; top: 5px; width: 10px; height: 16px; color: #999; }
.color { justify-content: space-between; width: 52px; height: 26px; margin-left: auto; padding: 0 3px 0 2px; border: 2px solid #a6a6a6; border-radius: 2px; }
.swatch { width: 32px; height: 18px; }
.mini { width: 8px; height: 8px; color: #777; }
.required { margin: 0 -2px 15px 0; padding: 11px 0 9px; border: solid #c8c8c8; border-width: 2px 0; font-size: 16px; }
.cmd { gap: 5px; margin-bottom: 16px; padding-left: 2px; }
.cmd svg { width: 18px; height: 20px; color: #222; }

.strip { display: flex; flex-direction: column; gap: 12px; padding-top: 16px; border-left: 2px solid #c8c8c8; color: #aaa; }
.strip button { justify-content: center; height: 40px; }
.strip .w24 { height: 22px; }
.strip .dark { color: #333; }
.strip .on { background: #cbcbcb; }
.strip .art { flex-direction: column; font: 18px/20px "Open Sans", sans-serif; }
.art svg { width: 20px; height: 6px; }

/* Status bar */
.status-bar { display: flex; align-items: center; height: 28px; border-top: 2px solid #c8c8c8; font-size: 13px; line-height: 20px; font-weight: 700; }
.pages { margin-right: auto; padding-left: 51px; }
.cell { display: flex; align-items: center; height: 26px; border-left: 2px solid #c8c8c8; }
.lang { gap: 22px; width: 264px; padding-left: 16px; }
.chev { width: 10px; height: 10px; margin-left: 9px; }
.ispell { width: 28px; height: 20px; }
.rev { justify-content: center; width: 48px; }
.zoom { gap: 24px; width: 296px; padding-left: 16px; }
.level { display: flex; align-items: center; gap: 11px; margin-left: -4px; }
```
